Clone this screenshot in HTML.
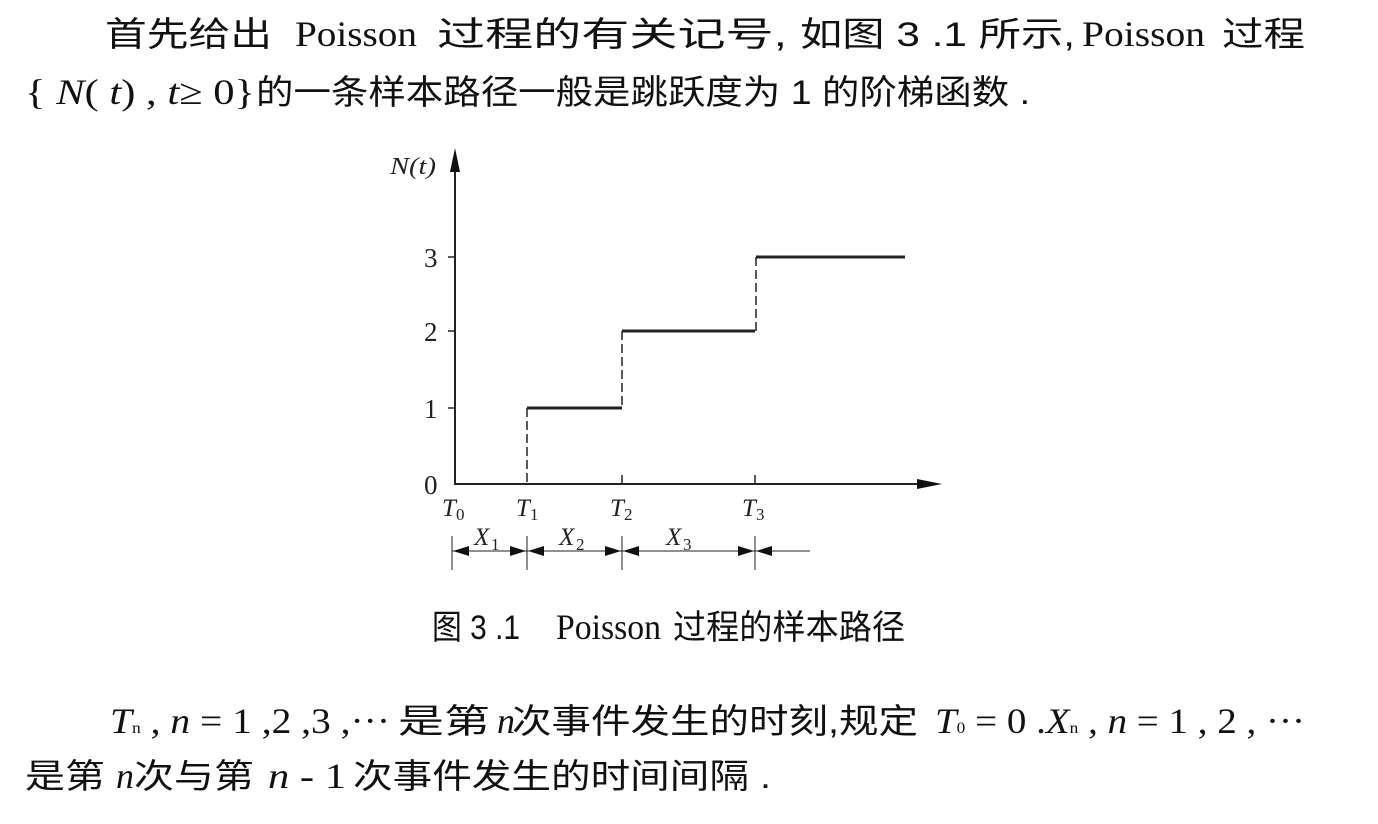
<!DOCTYPE html>
<html><head><meta charset="utf-8"><style>
html,body{margin:0;padding:0;background:#fff;width:1378px;height:824px;overflow:hidden}
svg{display:block}
.t{font-family:"Liberation Serif","Noto Sans CJK SC",serif;font-size:36px;fill:#111}
.c{font-family:"Liberation Sans","Noto Sans CJK SC",sans-serif;font-size:34px;fill:#111}
.i{font-style:italic}
.s{font-family:"Liberation Serif",serif;fill:#222}
</style></head><body>
<svg width="1378" height="824" viewBox="0 0 1378 824">
<!-- Line 1 -->
<text class="c" x="105" y="46" textLength="167" lengthAdjust="spacingAndGlyphs">首先给出</text>
<text class="t" x="295" y="46" textLength="122" lengthAdjust="spacingAndGlyphs">Poisson</text>
<text class="c" x="437" y="46" textLength="350" lengthAdjust="spacingAndGlyphs">过程的有关记号,</text>
<text class="c" x="800" y="46" textLength="275" lengthAdjust="spacingAndGlyphs">如图 3 .1 所示,</text>
<text class="t" x="1082" y="46" textLength="123" lengthAdjust="spacingAndGlyphs">Poisson</text>
<text class="c" x="1222" y="46" textLength="83" lengthAdjust="spacingAndGlyphs">过程</text>
<!-- Line 2 -->
<text class="t" x="25" y="104" textLength="230" lengthAdjust="spacingAndGlyphs">{ <tspan class="i">N</tspan>( <tspan class="i">t</tspan>) , <tspan class="i">t</tspan>≥ 0}</text>
<text class="c" x="256" y="104" textLength="774" lengthAdjust="spacingAndGlyphs">的一条样本路径一般是跳跃度为 1 的阶梯函数 .</text>

<!-- Chart -->
<g stroke="#222" fill="none">
<line x1="455" y1="160" x2="455" y2="485" stroke-width="2"/>
<line x1="455" y1="484" x2="925" y2="484" stroke-width="2"/>
<line x1="448" y1="257" x2="455" y2="257" stroke-width="1.5"/>
<line x1="448" y1="331" x2="455" y2="331" stroke-width="1.5"/>
<line x1="448" y1="408" x2="455" y2="408" stroke-width="1.5"/>
<line x1="527" y1="408" x2="622" y2="408" stroke-width="3"/>
<line x1="622" y1="331" x2="755" y2="331" stroke-width="3"/>
<line x1="756" y1="257" x2="905" y2="257" stroke-width="3"/>
<line x1="527" y1="408" x2="527" y2="484" stroke-width="1.5" stroke-dasharray="9,4"/>
<line x1="622" y1="331" x2="622" y2="408" stroke-width="1.5" stroke-dasharray="9,4"/>
<line x1="756" y1="257" x2="756" y2="331" stroke-width="1.5" stroke-dasharray="9,4"/>
<line x1="622" y1="475" x2="622" y2="484" stroke-width="1.5"/>
<line x1="755" y1="475" x2="755" y2="484" stroke-width="1.5"/>
<line x1="452" y1="551" x2="810" y2="551" stroke-width="1"/>
<line x1="452" y1="536" x2="452" y2="570" stroke-width="1"/>
<line x1="527" y1="536" x2="527" y2="570" stroke-width="1"/>
<line x1="622" y1="536" x2="622" y2="570" stroke-width="1"/>
<line x1="755" y1="536" x2="755" y2="570" stroke-width="1"/>
</g>
<g fill="#111">
<polygon points="455,148 450,172 460,172"/>
<polygon points="942,484 917,479 917,489"/>
<polygon points="453,551 469,546 469,556"/>
<polygon points="526,551 510,546 510,556"/>
<polygon points="528,551 544,546 544,556"/>
<polygon points="621,551 605,546 605,556"/>
<polygon points="623,551 639,546 639,556"/>
<polygon points="754,551 738,546 738,556"/>
<polygon points="756,551 772,546 772,556"/>
</g>
<g class="s" font-size="27">
<text x="390" y="174" class="i" font-size="24" textLength="46" lengthAdjust="spacingAndGlyphs">N(t)</text>
<text x="424" y="267">3</text>
<text x="424" y="341">2</text>
<text x="424" y="418">1</text>
<text x="424" y="494">0</text>
<text x="442" y="516" class="i" font-size="25">T</text><text x="456" y="520" font-size="17">0</text>
<text x="516" y="516" class="i" font-size="25">T</text><text x="530" y="520" font-size="17">1</text>
<text x="610" y="516" class="i" font-size="25">T</text><text x="624" y="520" font-size="17">2</text>
<text x="742" y="516" class="i" font-size="25">T</text><text x="756" y="520" font-size="17">3</text>
<text x="474" y="545" class="i" font-size="25">X</text><text x="491" y="550" font-size="17">1</text>
<text x="559" y="545" class="i" font-size="25">X</text><text x="576" y="550" font-size="17">2</text>
<text x="666" y="545" class="i" font-size="25">X</text><text x="683" y="550" font-size="17">3</text>
</g>
<!-- Caption -->
<text class="c" x="432" y="639" font-size="27" textLength="88" lengthAdjust="spacingAndGlyphs">图 3 .1</text>
<text class="t" x="556" y="639" font-size="28" textLength="105" lengthAdjust="spacingAndGlyphs">Poisson</text>
<text class="c" x="673" y="639" font-size="27" textLength="232" lengthAdjust="spacingAndGlyphs">过程的样本路径</text>

<!-- Line 3 -->
<text class="t" x="110" y="733" textLength="280" lengthAdjust="spacingAndGlyphs"><tspan class="i">T</tspan><tspan font-size="16">n</tspan> , <tspan class="i">n</tspan> = 1 ,2 ,3 ,···</text>
<text class="c" x="398" y="733" textLength="92" lengthAdjust="spacingAndGlyphs">是第</text>
<text class="t i" x="497" y="733">n</text>
<text class="c" x="512" y="733" textLength="406" lengthAdjust="spacingAndGlyphs">次事件发生的时刻,规定</text>
<text class="t" x="935" y="733" textLength="370" lengthAdjust="spacingAndGlyphs"><tspan class="i">T</tspan><tspan font-size="16">0</tspan> = 0 .<tspan class="i">X</tspan><tspan font-size="16">n</tspan> ,  <tspan class="i">n</tspan> = 1 , 2 , ···</text>
<!-- Line 4 -->
<text class="c" x="25" y="788" textLength="80" lengthAdjust="spacingAndGlyphs">是第</text>
<text class="t i" x="116" y="788">n</text>
<text class="c" x="134" y="788" textLength="120" lengthAdjust="spacingAndGlyphs">次与第</text>
<text class="t" x="268" y="788" textLength="78" lengthAdjust="spacingAndGlyphs"><tspan class="i">n</tspan> - 1</text>
<text class="c" x="353" y="788" textLength="418" lengthAdjust="spacingAndGlyphs">次事件发生的时间间隔 .</text>
</svg>
</body></html>
